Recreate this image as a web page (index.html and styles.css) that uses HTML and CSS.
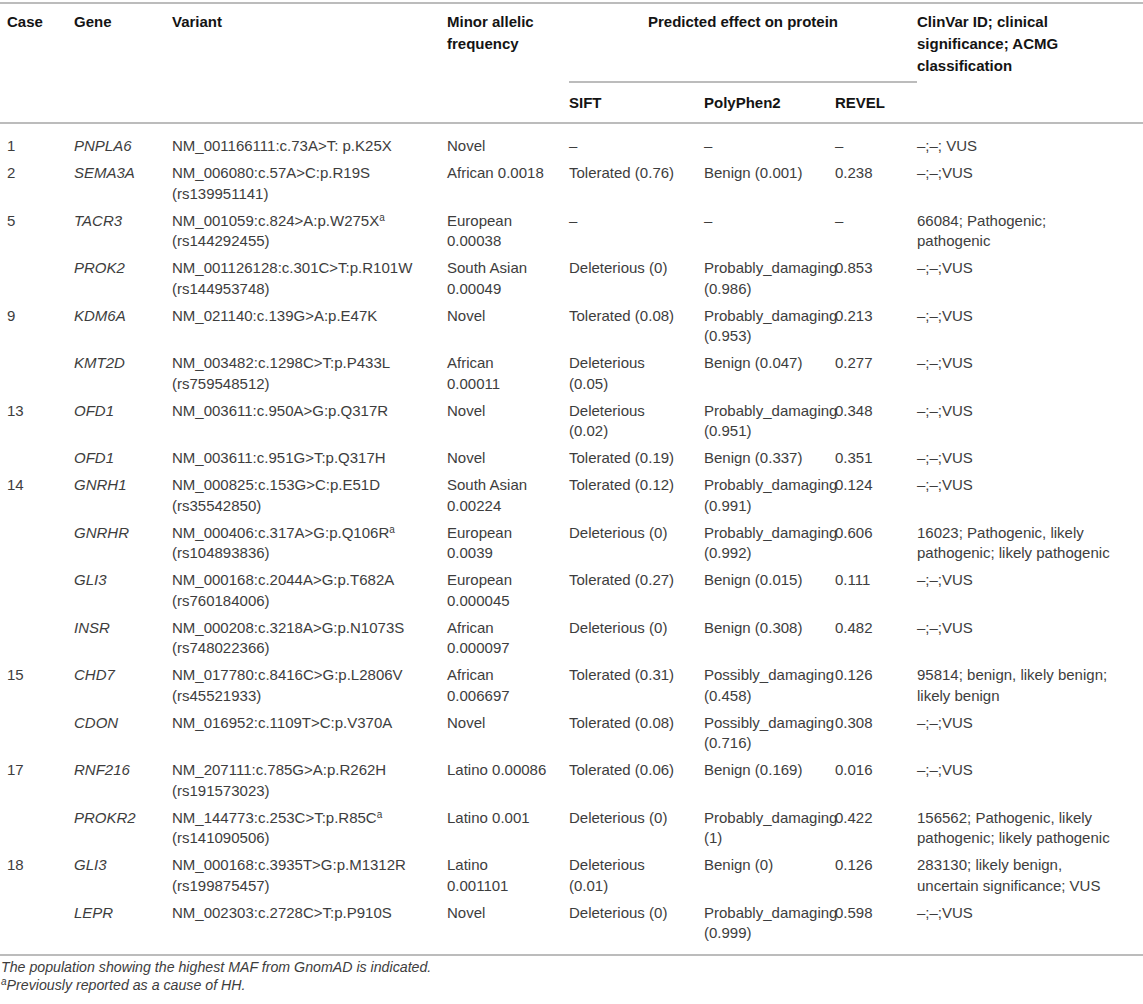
FILE: index.html
```html
<!DOCTYPE html>
<html lang="en">
<head>
<meta charset="utf-8">
<title>Variants table</title>
<link rel="stylesheet" href="styles.css">
</head>
<body>
<table class="tbl">
  <colgroup>
    <col class="c-case">
    <col class="c-gene">
    <col class="c-var">
    <col class="c-maf">
    <col class="c-sift">
    <col class="c-poly">
    <col class="c-revel">
    <col class="c-clin">
  </colgroup>
  <thead>
    <tr class="hr1">
      <th rowspan="2" class="hs first">Case</th>
      <th rowspan="2" class="hs">Gene</th>
      <th rowspan="2" class="hs">Variant</th>
      <th rowspan="2" class="hs maf">Minor allelic frequency</th>
      <th colspan="3" class="group">Predicted effect on protein</th>
      <th rowspan="2" class="hs clin">ClinVar ID; clinical significance; ACMG classification</th>
    </tr>
    <tr class="hr2">
      <th class="sub">SIFT</th>
      <th class="sub">PolyPhen2</th>
      <th class="sub">REVEL</th>
    </tr>
  </thead>
  <tbody>
    <tr>
      <td>1</td><td class="g">PNPLA6</td><td>NM_001166111:c.73A&gt;T: p.K25X</td><td class="maf">Novel</td><td>–</td><td>–</td><td>–</td><td class="clin">–;–; VUS</td>
    </tr>
    <tr>
      <td>2</td><td class="g">SEMA3A</td><td>NM_006080:c.57A&gt;C:p.R19S (rs139951141)</td><td class="maf">African 0.0018</td><td>Tolerated (0.76)</td><td>Benign (0.001)</td><td>0.238</td><td class="clin">–;–;VUS</td>
    </tr>
    <tr>
      <td>5</td><td class="g">TACR3</td><td>NM_001059:c.824&gt;A:p.W275X<sup class="sup">a</sup> (rs144292455)</td><td class="maf">European 0.00038</td><td>–</td><td>–</td><td>–</td><td class="clin">66084; Pathogenic; pathogenic</td>
    </tr>
    <tr>
      <td></td><td class="g">PROK2</td><td>NM_001126128:c.301C&gt;T:p.R101W (rs144953748)</td><td class="maf">South Asian 0.00049</td><td>Deleterious (0)</td><td>Probably_damaging (0.986)</td><td>0.853</td><td class="clin">–;–;VUS</td>
    </tr>
    <tr>
      <td>9</td><td class="g">KDM6A</td><td>NM_021140:c.139G&gt;A:p.E47K</td><td class="maf">Novel</td><td>Tolerated (0.08)</td><td>Probably_damaging (0.953)</td><td>0.213</td><td class="clin">–;–;VUS</td>
    </tr>
    <tr>
      <td></td><td class="g">KMT2D</td><td>NM_003482:c.1298C&gt;T:p.P433L (rs759548512)</td><td class="maf">African 0.00011</td><td>Deleterious (0.05)</td><td>Benign (0.047)</td><td>0.277</td><td class="clin">–;–;VUS</td>
    </tr>
    <tr>
      <td>13</td><td class="g">OFD1</td><td>NM_003611:c.950A&gt;G:p.Q317R</td><td class="maf">Novel</td><td>Deleterious (0.02)</td><td>Probably_damaging (0.951)</td><td>0.348</td><td class="clin">–;–;VUS</td>
    </tr>
    <tr>
      <td></td><td class="g">OFD1</td><td>NM_003611:c.951G&gt;T:p.Q317H</td><td class="maf">Novel</td><td>Tolerated (0.19)</td><td>Benign (0.337)</td><td>0.351</td><td class="clin">–;–;VUS</td>
    </tr>
    <tr>
      <td>14</td><td class="g">GNRH1</td><td>NM_000825:c.153G&gt;C:p.E51D (rs35542850)</td><td class="maf">South Asian 0.00224</td><td>Tolerated (0.12)</td><td>Probably_damaging (0.991)</td><td>0.124</td><td class="clin">–;–;VUS</td>
    </tr>
    <tr>
      <td></td><td class="g">GNRHR</td><td>NM_000406:c.317A&gt;G:p.Q106R<sup class="sup">a</sup> (rs104893836)</td><td class="maf">European 0.0039</td><td>Deleterious (0)</td><td>Probably_damaging (0.992)</td><td>0.606</td><td class="clin">16023; Pathogenic, likely pathogenic; likely pathogenic</td>
    </tr>
    <tr>
      <td></td><td class="g">GLI3</td><td>NM_000168:c.2044A&gt;G:p.T682A (rs760184006)</td><td class="maf">European 0.000045</td><td>Tolerated (0.27)</td><td>Benign (0.015)</td><td>0.111</td><td class="clin">–;–;VUS</td>
    </tr>
    <tr>
      <td></td><td class="g">INSR</td><td>NM_000208:c.3218A&gt;G:p.N1073S (rs748022366)</td><td class="maf">African 0.000097</td><td>Deleterious (0)</td><td>Benign (0.308)</td><td>0.482</td><td class="clin">–;–;VUS</td>
    </tr>
    <tr>
      <td>15</td><td class="g">CHD7</td><td>NM_017780:c.8416C&gt;G:p.L2806V (rs45521933)</td><td class="maf">African 0.006697</td><td>Tolerated (0.31)</td><td>Possibly_damaging (0.458)</td><td>0.126</td><td class="clin">95814; benign, likely benign; likely benign</td>
    </tr>
    <tr>
      <td></td><td class="g">CDON</td><td>NM_016952:c.1109T&gt;C:p.V370A</td><td class="maf">Novel</td><td>Tolerated (0.08)</td><td>Possibly_damaging (0.716)</td><td>0.308</td><td class="clin">–;–;VUS</td>
    </tr>
    <tr>
      <td>17</td><td class="g">RNF216</td><td>NM_207111:c.785G&gt;A:p.R262H (rs191573023)</td><td class="maf">Latino 0.00086</td><td>Tolerated (0.06)</td><td>Benign (0.169)</td><td>0.016</td><td class="clin">–;–;VUS</td>
    </tr>
    <tr>
      <td></td><td class="g">PROKR2</td><td>NM_144773:c.253C&gt;T:p.R85C<sup class="sup">a</sup> (rs141090506)</td><td class="maf">Latino 0.001</td><td>Deleterious (0)</td><td>Probably_damaging (1)</td><td>0.422</td><td class="clin">156562; Pathogenic, likely pathogenic; likely pathogenic</td>
    </tr>
    <tr>
      <td>18</td><td class="g">GLI3</td><td>NM_000168:c.3935T&gt;G:p.M1312R (rs199875457)</td><td class="maf">Latino 0.001101</td><td>Deleterious (0.01)</td><td>Benign (0)</td><td>0.126</td><td class="clin">283130; likely benign, uncertain significance; VUS</td>
    </tr>
    <tr>
      <td></td><td class="g">LEPR</td><td>NM_002303:c.2728C&gt;T:p.P910S</td><td class="maf">Novel</td><td>Deleterious (0)</td><td>Probably_damaging (0.999)</td><td>0.598</td><td class="clin">–;–;VUS</td>
    </tr>
  </tbody>
</table>
<div class="notes">
  <p>The population showing the highest MAF from GnomAD is indicated.</p>
  <p><sup class="sup">a</sup>Previously reported as a cause of HH.</p>
</div>
</body>
</html>
```

FILE: styles.css
```css
html, body {
  margin: 0;
  padding: 0;
  background: #ffffff;
}

body {
  font-family: "Liberation Sans", Arial, Helvetica, sans-serif;
  color: #3d3d3d;
}

.tbl {
  width: 1143px;
  table-layout: fixed;
  border-collapse: separate;
  border-spacing: 0;
  margin-top: 2px;
  border-top: 2px solid #bcbcbc;
  border-bottom: 2px solid #bcbcbc;
  font-size: 15px;
}

.c-case { width: 74px; }
.c-gene { width: 98px; }
.c-var { width: 275px; }
.c-maf { width: 122px; }
.c-sift { width: 135px; }
.c-poly { width: 131px; }
.c-revel { width: 82px; }
.c-clin { width: 226px; }

.hr1 { height: 79px; }
.hr2 { height: 41px; }

th {
  font-weight: bold;
  color: #141414;
  text-align: left;
  line-height: 22px;
}

.hs {
  vertical-align: top;
  padding: 7px 18px 0 0;
  border-bottom: 2px solid #bcbcbc;
}

.hs.first {
  padding-left: 7px;
}

.hs.maf {
  padding-right: 20px;
}

.hs.clin {
  padding-right: 20px;
}

.group {
  vertical-align: top;
  text-align: center;
  padding: 7px 0 0 0;
  border-bottom: 2px solid #bcbcbc;
}

.sub {
  vertical-align: middle;
  padding: 0 18px 0 0;
  border-bottom: 2px solid #bcbcbc;
}

td {
  vertical-align: top;
  line-height: 20.5px;
  padding: 3px 18px 3.5px 0;
  white-space: normal;
}

td:first-child {
  padding-left: 7px;
}

td.maf {
  padding-right: 20px;
}

td.clin {
  padding-right: 20px;
}

td.g {
  font-style: italic;
}

tbody tr:first-child td {
  padding-top: 12px;
}

tbody tr:last-child td {
  padding-bottom: 10.5px;
}

.sup {
  font-size: 10px;
  line-height: 0;
  vertical-align: 5px;
}

.notes {
  padding: 2px 0 0 1px;
  font-style: italic;
  font-size: 14.2px;
  line-height: 18px;
  color: #3d3d3d;
}

.notes p {
  margin: 0;
}
```
